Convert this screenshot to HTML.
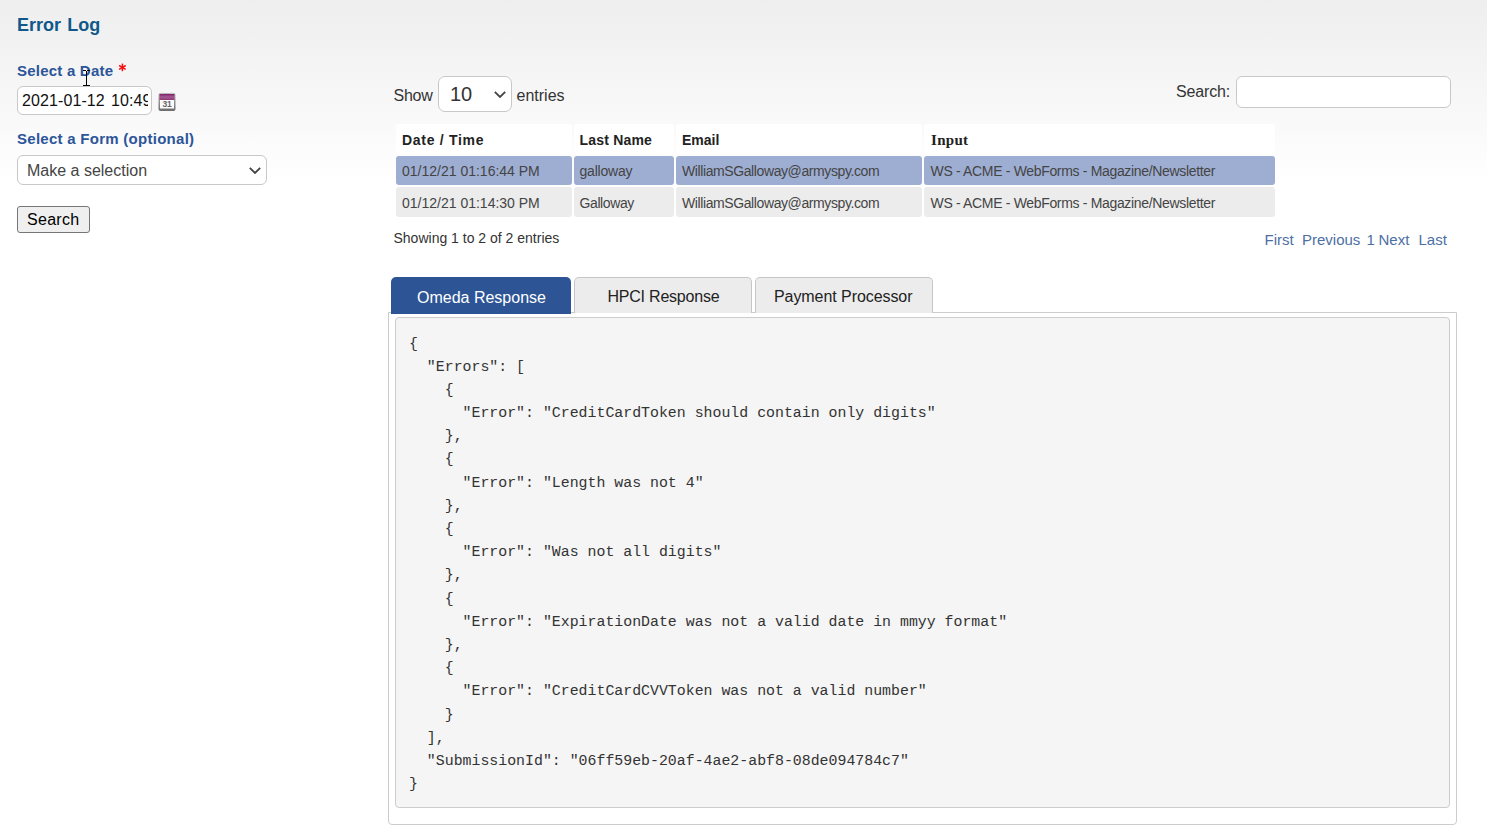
<!DOCTYPE html>
<html><head><meta charset="utf-8">
<style>
html,body{margin:0;padding:0;}
body{width:1487px;height:825px;overflow:hidden;position:relative;
 background:linear-gradient(to bottom,#eeeeee 0px,#ffffff 184px);
 font-family:"Liberation Sans",sans-serif;}
.a{position:absolute;white-space:pre;line-height:1;}
.box{position:absolute;box-sizing:border-box;}
.cell{position:absolute;box-sizing:border-box;border-radius:3px;}
.th{background:#fff;}
.r1{background:#9eaed2;}
.r2{background:#ececec;}
.ct{position:absolute;white-space:pre;line-height:1;font-size:14px;color:#444;}
.hd{position:absolute;white-space:pre;line-height:1;font-size:14px;font-weight:700;color:#222;}
pre{margin:0;}
</style></head><body>

<!-- Left form -->
<div class="a" style="left:17px;top:15.6px;font-size:18px;font-weight:700;color:#10588a;word-spacing:1.2px;">Error Log</div>
<div class="a" style="left:17px;top:63px;font-size:15px;font-weight:700;color:#2c559a;letter-spacing:0.22px;">Select a Date</div><svg style="position:absolute;left:118px;top:63px" width="9" height="9" viewBox="0 0 9 9"><g stroke="#f51010" stroke-width="1.5" stroke-linecap="butt"><path d="M4.4 0.6 V8.2"/><path d="M1.1 2.5 L7.7 6.3"/><path d="M1.1 6.3 L7.7 2.5"/></g></svg>

<div class="box" style="left:17px;top:86px;width:135px;height:29px;border:1px solid #c8c8c8;border-radius:6px;background:#fff;"></div>
<div class="box" style="left:18px;top:87px;width:129.5px;height:27px;overflow:hidden;"><div class="a" style="left:4px;top:5.5px;font-size:16px;color:#111;letter-spacing:0.1px;word-spacing:1.6px;">2021-01-12 10:49</div></div>
<!-- calendar icon -->
<svg style="position:absolute;left:158px;top:92px" width="18" height="20" viewBox="0 0 18 20">
<defs><linearGradient id="cg" x1="0" y1="0" x2="0" y2="1"><stop offset="0" stop-color="#b9b9b9"/><stop offset="1" stop-color="#6c6c6c"/></linearGradient>
<linearGradient id="pg" x1="0" y1="0" x2="0" y2="1"><stop offset="0" stop-color="#7d1f68"/><stop offset="0.5" stop-color="#a45a92"/><stop offset="1" stop-color="#8e3579"/></linearGradient></defs>
<rect x="0.5" y="1" width="17" height="18" rx="2" fill="url(#cg)"/>
<rect x="1.5" y="2" width="15" height="6" fill="url(#pg)"/>
<rect x="2" y="8" width="14" height="8.5" fill="#fbfbfb"/>
<rect x="3.5" y="0.5" width="2" height="1.5" fill="#cfcfcf"/><rect x="12.5" y="0.5" width="2" height="1.5" fill="#cfcfcf"/>
<text x="9" y="15.3" text-anchor="middle" font-family="Liberation Sans" font-size="8.5" font-weight="700" fill="#666" letter-spacing="-0.2">31</text>
</svg>

<div class="a" style="left:17px;top:131px;font-size:15px;font-weight:700;color:#2c559a;letter-spacing:0.27px;">Select a Form (optional)</div>
<div class="box" style="left:17px;top:155px;width:250px;height:30px;border:1px solid #c8c8c8;border-radius:6px;background:#fff;">
</div>
<div class="a" style="left:27px;top:163px;font-size:16px;color:#444;">Make a selection</div>
<svg style="position:absolute;left:249px;top:167px" width="12" height="7" viewBox="0 0 12 7"><path d="M0.8 0.8 L6 6 L11.2 0.8" fill="none" stroke="#444" stroke-width="1.8"/></svg>

<div class="box" style="left:17px;top:206px;width:73px;height:27px;border:1px solid #767676;border-radius:3px;background:#efefef;"></div>
<div class="a" style="left:27px;top:212.2px;font-size:16px;color:#000;letter-spacing:0.3px;">Search</div>

<!-- cursor -->
<div class="box" style="left:86px;top:71px;width:1px;height:15px;background:#000;"></div>
<div class="box" style="left:83px;top:70px;width:3px;height:1px;background:#000;"></div>
<div class="box" style="left:87px;top:70px;width:3px;height:1px;background:#000;"></div>
<div class="box" style="left:83px;top:85px;width:3px;height:1px;background:#000;"></div>
<div class="box" style="left:87px;top:85px;width:3px;height:1px;background:#000;"></div>

<!-- datatable controls -->
<div class="a" style="left:393.5px;top:88px;font-size:16px;color:#333;letter-spacing:-0.25px;">Show</div>
<div class="box" style="left:438px;top:76px;width:74px;height:36px;border:1px solid #c8c8c8;border-radius:7px;background:#fff;"></div>
<div class="a" style="left:450px;top:84px;font-size:20px;color:#333;">10</div>
<svg style="position:absolute;left:494px;top:91px" width="12" height="7" viewBox="0 0 12 7"><path d="M0.8 0.8 L6 6 L11.2 0.8" fill="none" stroke="#444" stroke-width="1.8"/></svg>
<div class="a" style="left:516.5px;top:88px;font-size:16px;color:#333;">entries</div>

<div class="a" style="left:1176px;top:83.5px;font-size:16px;color:#333;letter-spacing:-0.15px;">Search:</div>
<div class="box" style="left:1236px;top:76px;width:215px;height:32px;border:1px solid #c8c8c8;border-radius:6px;background:#fff;"></div>

<!-- table -->
<div class="cell th" style="left:396px;top:124px;width:176px;height:30px;"></div>
<div class="cell th" style="left:574px;top:124px;width:100px;height:30px;"></div>
<div class="cell th" style="left:676px;top:124px;width:246px;height:30px;"></div>
<div class="cell th" style="left:924px;top:124px;width:351px;height:30px;"></div>

<div class="cell r1" style="left:396px;top:156px;width:176px;height:29px;"></div>
<div class="cell r1" style="left:574px;top:156px;width:100px;height:29px;"></div>
<div class="cell r1" style="left:676px;top:156px;width:246px;height:29px;"></div>
<div class="cell r1" style="left:924px;top:156px;width:351px;height:29px;"></div>

<div class="cell r2" style="left:396px;top:187px;width:176px;height:30px;"></div>
<div class="cell r2" style="left:574px;top:187px;width:100px;height:30px;"></div>
<div class="cell r2" style="left:676px;top:187px;width:246px;height:30px;"></div>
<div class="cell r2" style="left:924px;top:187px;width:351px;height:30px;"></div>

<div class="hd" style="left:402px;top:133px;letter-spacing:0.7px;">Date / Time</div>
<div class="hd" style="left:579.5px;top:133px;letter-spacing:0.2px;">Last Name</div>
<div class="hd" style="left:682px;top:133px;">Email</div>
<div class="hd" style="left:931px;top:133.2px;font-family:'Liberation Serif',serif;font-size:15px;letter-spacing:0.3px;">Input</div>

<div class="ct" style="left:402px;top:163.5px;">01/12/21 01:16:44 PM</div>
<div class="ct" style="left:579.5px;top:163.5px;letter-spacing:-0.2px;">galloway</div>
<div class="ct" style="left:682px;top:163.5px;letter-spacing:-0.4px;">WilliamSGalloway@armyspy.com</div>
<div class="ct" style="left:930.5px;top:163.5px;letter-spacing:-0.33px;">WS - ACME - WebForms - Magazine/Newsletter</div>

<div class="ct" style="left:402px;top:196.2px;">01/12/21 01:14:30 PM</div>
<div class="ct" style="left:579.5px;top:196.2px;letter-spacing:-0.4px;">Galloway</div>
<div class="ct" style="left:682px;top:196.2px;letter-spacing:-0.4px;">WilliamSGalloway@armyspy.com</div>
<div class="ct" style="left:930.5px;top:196.2px;letter-spacing:-0.33px;">WS - ACME - WebForms - Magazine/Newsletter</div>

<div class="a" style="left:393.5px;top:231px;font-size:14px;color:#333;">Showing 1 to 2 of 2 entries</div>

<div class="a" style="left:1264.5px;top:232.2px;font-size:15px;color:#4d6fa3;">First</div>
<div class="a" style="left:1302px;top:232.2px;font-size:15px;color:#4d6fa3;">Previous</div>
<div class="a" style="left:1366.5px;top:232.2px;font-size:15px;color:#4d6fa3;">1</div>
<div class="a" style="left:1378.5px;top:232.2px;font-size:15px;color:#4d6fa3;">Next</div>
<div class="a" style="left:1418.5px;top:232.2px;font-size:15px;color:#4d6fa3;">Last</div>

<!-- tabs panel -->
<div class="box" style="left:388px;top:312px;width:1069px;height:513px;border:1px solid #cccccc;border-radius:0 0 4px 4px;background:#fff;"></div>
<div class="box" style="left:391px;top:277px;width:180px;height:37px;background:#2d5596;border-radius:5px 5px 0 0;"></div>
<div class="a" style="left:417px;top:289.6px;font-size:16px;color:#fff;">Omeda Response</div>
<div class="box" style="left:574px;top:277px;width:178px;height:36px;background:#ececec;border:1px solid #c6c6c6;border-bottom:none;border-radius:5px 5px 0 0;"></div>
<div class="a" style="left:607.5px;top:289px;font-size:16px;color:#222;letter-spacing:-0.22px;">HPCI Response</div>
<div class="box" style="left:755px;top:277px;width:178px;height:36px;background:#ececec;border:1px solid #c6c6c6;border-bottom:none;border-radius:5px 5px 0 0;"></div>
<div class="a" style="left:774px;top:289px;font-size:16px;color:#222;letter-spacing:-0.07px;">Payment Processor</div>

<div class="box" style="left:395px;top:317px;width:1055px;height:491px;border:1px solid #cccccc;border-radius:4px;background:#f5f5f5;"></div>
<pre class="a" style="left:409px;top:332.5px;font-family:'Liberation Mono',monospace;font-size:14.88px;line-height:23.18px;color:#333;">{
  "Errors": [
    {
      "Error": "CreditCardToken should contain only digits"
    },
    {
      "Error": "Length was not 4"
    },
    {
      "Error": "Was not all digits"
    },
    {
      "Error": "ExpirationDate was not a valid date in mmyy format"
    },
    {
      "Error": "CreditCardCVVToken was not a valid number"
    }
  ],
  "SubmissionId": "06ff59eb-20af-4ae2-abf8-08de094784c7"
}</pre>

</body></html>
